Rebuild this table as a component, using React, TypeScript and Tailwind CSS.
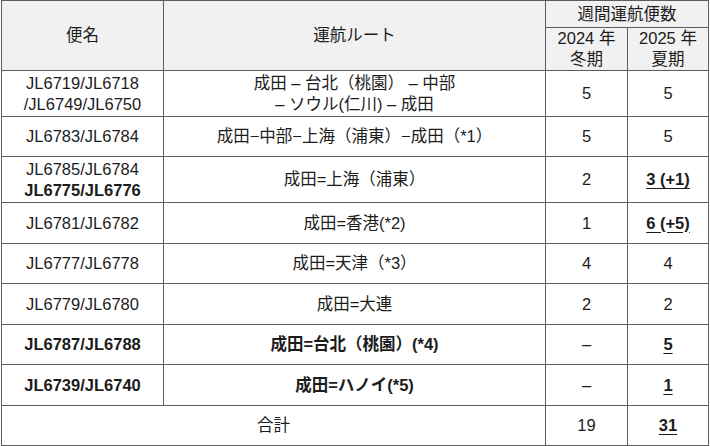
const rows = [
  {
    name: ["JL6719/JL6718", "/JL6749/JL6750"],
    route: ["成田 – 台北（桃園） – 中部", "– ソウル(仁川) – 成田"],
    w24: "5",
    s25: "5",
    h: "h-[46px]",
  },
  { name: ["JL6783/JL6784"], route: ["成田−中部−上海（浦東）−成田（*1）"], w24: "5", s25: "5", h: "h-[40px]" },
  {
    name: ["JL6785/JL6784"],
    nameBold: "JL6775/JL6776",
    route: ["成田=上海（浦東）"],
    w24: "2",
    s25: "3 (+1)",
    s25Bold: true,
    h: "h-[46px]",
  },
  { name: ["JL6781/JL6782"], route: ["成田=香港(*2)"], w24: "1", s25: "6 (+5)", s25Bold: true, h: "h-[41px]" },
  { name: ["JL6777/JL6778"], route: ["成田=天津（*3）"], w24: "4", s25: "4", h: "h-[40px]" },
  { name: ["JL6779/JL6780"], route: ["成田=大連"], w24: "2", s25: "2", h: "h-[41px]" },
  { name: ["JL6787/JL6788"], route: ["成田=台北（桃園）(*4)"], w24: "–", s25: "5", s25Bold: true, bold: true, h: "h-[40px]" },
  { name: ["JL6739/JL6740"], route: ["成田=ハノイ(*5)"], w24: "–", s25: "1", s25Bold: true, bold: true, h: "h-[41px]" },
];

type Row = (typeof rows)[number] & { nameBold?: string; s25Bold?: boolean; bold?: boolean };

const cell = "border border-[#5c5c5c] text-center align-middle p-0";

export default function App() {
  return (
    <div
      className="w-[710px] h-[446px] bg-white pl-px text-[16.5px] leading-[21px] text-[#1c1c1c]"
      style={{ fontFamily: '"Liberation Sans", "Noto Sans CJK JP", sans-serif' }}
    >
      <table className="border-collapse table-fixed w-[707px]">
        <colgroup>
          <col className="w-[162px]" />
          <col className="w-[382px]" />
          <col className="w-[82px]" />
          <col className="w-[81px]" />
        </colgroup>
        <thead className="bg-[#f1f1f1]">
          <tr className="h-[27px]">
            <th rowSpan={2} className={`${cell} font-normal`}>
              便名
            </th>
            <th rowSpan={2} className={`${cell} font-normal`}>
              運航ルート
            </th>
            <th colSpan={2} className={`${cell} font-normal`}>
              週間運航便数
            </th>
          </tr>
          <tr className="h-[41px]">
            <th className={`${cell} font-normal`}>
              2024 年<br />
              冬期
            </th>
            <th className={`${cell} font-normal`}>
              2025 年<br />
              夏期
            </th>
          </tr>
        </thead>
        <tbody>
          {(rows as Row[]).map((r, i) => (
            <tr key={i} className={r.h}>
              <td className={`${cell} ${r.bold ? "font-bold" : ""}`}>
                {r.name.map((n) => (
                  <div key={n}>{n}</div>
                ))}
                {r.nameBold && <div className="font-bold">{r.nameBold}</div>}
              </td>
              <td className={`${cell} ${r.bold ? "font-bold" : ""}`}>
                {r.route.map((t) => (
                  <div key={t}>{t}</div>
                ))}
              </td>
              <td className={cell}>{r.w24}</td>
              <td className={cell}>
                {r.s25Bold ? (
                  <span className="font-bold underline underline-offset-[3px]">{r.s25}</span>
                ) : (
                  r.s25
                )}
              </td>
            </tr>
          ))}
          <tr className="h-[40px]">
            <td colSpan={2} className={cell}>
              合計
            </td>
            <td className={cell}>19</td>
            <td className={cell}>
              <span className="font-bold underline underline-offset-[3px]">31</span>
            </td>
          </tr>
        </tbody>
      </table>
    </div>
  );
}
